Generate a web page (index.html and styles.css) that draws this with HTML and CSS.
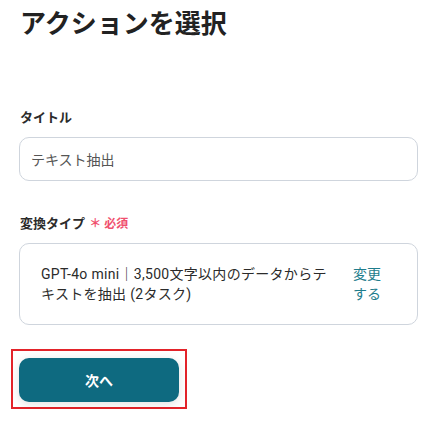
FILE: index.html
```html
<!DOCTYPE html>
<html lang="ja">
<head>
<meta charset="utf-8">
<link rel="stylesheet" href="styles.css">
</head>
<body>
<div class="page">
  <h1 class="title">アクションを選択</h1>
  <div class="field field-first">
    <div class="label">タイトル</div>
    <div class="input">テキスト抽出</div>
  </div>
  <div class="field field-second">
    <div class="label">変換タイプ <span class="req">＊ 必須</span></div>
    <div class="select-box">
      <div class="select-text">GPT-4o mini｜3,500文字以内のデータからテキストを抽出 (2タスク)</div>
      <div class="change-link">変更する</div>
    </div>
  </div>
  <div class="highlight">
    <button class="next-btn">次へ</button>
  </div>
</div>
</body>
</html>
```

FILE: styles.css
```css
* { box-sizing: border-box; }
html, body { margin: 0; padding: 0; background: #fff; }
body {
  font-family: Roboto, "Noto Sans CJK JP", sans-serif;
  color: #2a2a2a;
}
.page {
  padding: 6px 20px 0 19px;
}
.title {
  margin: 0;
  font-size: 26px;
  line-height: 36px;
  font-weight: 600;
  color: #222;
  padding-left: 1px;
}
.field-first { margin-top: 66px; }
.field-second { margin-top: 33px; }
.label {
  font-size: 13px;
  font-weight: 700;
  line-height: 20px;
  color: #2b2b2b;
  padding-left: 1px;
}
.req {
  color: #f0506e;
  font-size: 12px;
  font-weight: 700;
  margin-left: 1px;
}
.input {
  margin-top: 9px;
  width: 399px;
  height: 44px;
  border: 1px solid #cfd5dd;
  border-radius: 10px;
  padding: 0 11px;
  display: flex;
  align-items: center;
  font-size: 14px;
  color: #555;
}
.select-box {
  margin-top: 9px;
  width: 399px;
  border: 1px solid #cfd5dd;
  border-radius: 10px;
  padding: 20px 36px 20px 21px;
  display: flex;
  gap: 18px;
  font-size: 14px;
  line-height: 20px;
}
.select-text {
  flex: 0 0 294px;
  color: #2b2b2b;
  letter-spacing: 0.3px;
}
.change-link {
  width: 28px;
  color: #1e7d8c;
}
.highlight {
  display: inline-block;
  margin-top: 24px;
  margin-left: -8px;
  border: 2px solid #e3232a;
  padding: 7px 6px 5px 6px;
}
.next-btn {
  display: block;
  width: 160px;
  height: 44px;
  border: none;
  border-radius: 10px;
  background: #0e6a80;
  color: #fff;
  font-family: Roboto, "Noto Sans CJK JP", sans-serif;
  font-size: 14px;
  font-weight: 700;
  box-shadow: 0 2px 10px rgba(0, 0, 0, 0.12);
  cursor: pointer;
}
```
